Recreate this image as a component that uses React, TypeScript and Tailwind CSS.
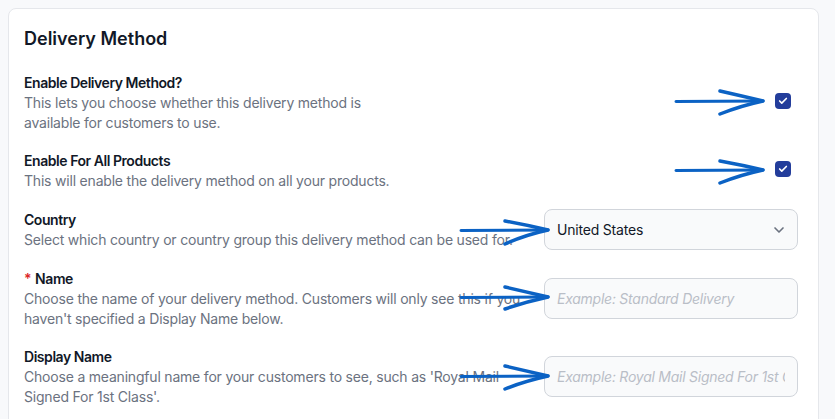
import React from 'react';
import { ChevronDown, Check } from 'lucide-react';

function Checkbox() {
  return (
    <div className="mb-1 mr-[7px] flex h-4 w-4 items-center justify-center rounded-[4px] bg-[#233d9b]">
      <Check className="h-[10px] w-[10px] text-white" strokeWidth={4} />
    </div>
  );
}

function FieldText({ label, desc, required }: { label: string; desc: string; required?: boolean }) {
  return (
    <div>
      <div className="text-sm font-semibold leading-5 tracking-[-0.45px] text-[#111827]">
        {required && <span className="mr-1 text-[#dc2626]">*</span>}
        {label}
      </div>
      <p className="text-sm leading-5 tracking-[-0.2px] text-[#6b7280]">{desc}</p>
    </div>
  );
}

function TextInput({ placeholder }: { placeholder: string }) {
  return (
    <input
      placeholder={placeholder}
      className="mb-[2px] h-[41px] w-[254px] shrink-0 rounded-lg border border-[#d1d5db] bg-[#f9fafb] px-3 text-sm italic tracking-[-0.25px] text-[#111827] outline-none placeholder:text-[#b9bec7]"
    />
  );
}

// hand-drawn annotation arrows: [x1, x2, y, headX, headTop, headBottom]
const arrows = [
  [676, 763, 101, 720, 91, 114],
  [676, 763, 170, 720, 161, 183],
  [461, 548, 230, 505, 221, 244],
  [461, 548, 297, 505, 287, 309],
  [461, 548, 376, 505, 366, 389],
];

export default function App() {
  return (
    <div
      className="relative min-h-[419px] overflow-hidden bg-[#f8f9fb] pl-2 pr-4 pt-2"
      style={{ fontFamily: 'Inter, "Noto Sans", sans-serif' }}
    >
      <div className="h-[420px] rounded-lg border border-[#e5e7eb] bg-white pl-[15px] pr-5 pt-4">
        <h2 className="text-lg font-semibold leading-7 text-[#111827]">Delivery Method</h2>

        <div className="mt-5 flex flex-col gap-[18px]">
          <div className="flex items-center justify-between">
            <div className="w-[380px]">
              <FieldText
                label="Enable Delivery Method?"
                desc="This lets you choose whether this delivery method is available for customers to use."
              />
            </div>
            <Checkbox />
          </div>

          <div className="flex items-center justify-between">
            <div className="w-[380px]">
              <FieldText
                label="Enable For All Products"
                desc="This will enable the delivery method on all your products."
              />
            </div>
            <Checkbox />
          </div>

          <div className="flex items-center justify-between gap-[6px]">
            <FieldText
              label="Country"
              desc="Select which country or country group this delivery method can be used for."
            />
            <div className="mb-[1px] flex h-[41px] w-[254px] shrink-0 items-center justify-between rounded-lg border border-[#d1d5db] bg-[#f9fafb] pl-3 pr-[10px] text-sm tracking-[-0.2px] text-[#111827]">
              <span>United States</span>
              <ChevronDown className="h-4 w-4 text-[#6b7280]" strokeWidth={2.5} />
            </div>
          </div>

          <div className="flex items-center justify-between gap-[6px]">
            <FieldText
              required
              label="Name"
              desc="Choose the name of your delivery method. Customers will only see this if you haven't specified a Display Name below."
            />
            <TextInput placeholder="Example: Standard Delivery" />
          </div>

          <div className="flex items-center justify-between gap-[6px]">
            <FieldText
              label="Display Name"
              desc="Choose a meaningful name for your customers to see, such as 'Royal Mail Signed For 1st Class'."
            />
            <TextInput placeholder="Example: Royal Mail Signed For 1st Class" />
          </div>
        </div>
      </div>

      <svg className="pointer-events-none absolute left-0 top-0" width="835" height="419">
        {arrows.map(([x1, x2, y, hx, ht, hb], i) => (
          <g key={i} fill="none" stroke="#0b62c4" strokeLinecap="round" strokeLinejoin="round">
            <path d={`M${x1} ${y + 0.5} L${x2} ${y}`} strokeWidth={3} />
            <path
              d={`M${hx} ${ht} Q${hx + 22} ${y - 5} ${x2} ${y} Q${hx + 20} ${y + 5} ${hx} ${hb}`}
              strokeWidth={3.5}
            />
          </g>
        ))}
      </svg>
    </div>
  );
}
